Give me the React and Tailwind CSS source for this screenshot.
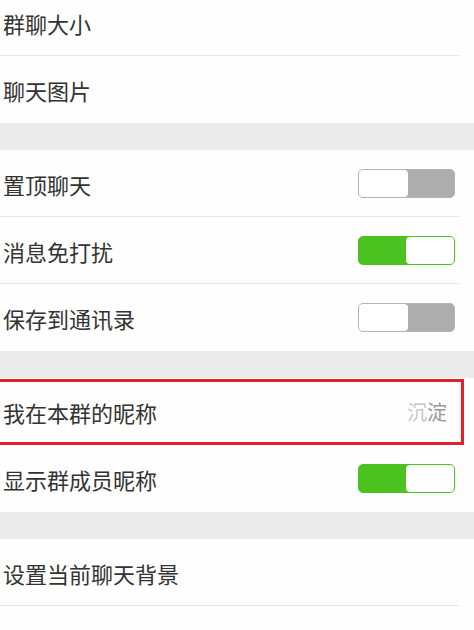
import React from "react";

const font = { fontFamily: '"Noto Sans CJK SC", "Noto Sans", sans-serif' };

function Toggle({ on }) {
  if (on) {
    return (
      <div className="w-[97px] h-[29px] rounded-[5px] bg-[#4bc21f] border border-[#4bc21f] flex justify-end">
        <div className="w-[48px] h-full rounded-[4px] bg-white" />
      </div>
    );
  }
  return (
    <div className="w-[97px] h-[29px] rounded-[5px] bg-[#adadad] border border-[#b3b3b3] flex">
      <div className="w-[49px] h-full rounded-[4px] bg-white" />
    </div>
  );
}

function Row({ label, divider, children, className = "" }) {
  return (
    <div className={"relative h-[67px] bg-[#fefefe] flex items-center pl-[3px] pr-[19px] " + className}>
      <span className="text-[22px] text-[#333333] leading-none">{label}</span>
      <div className="ml-auto flex items-center">{children}</div>
      {divider && <div className="absolute left-0 bottom-0 w-[459px] h-px bg-[#e6e6e6]" />}
    </div>
  );
}

function Band() {
  return <div className="h-[27px] bg-[#ebebeb]" />;
}

export default function App() {
  return (
    <div className="w-[474px] h-[630px] overflow-hidden bg-[#fefefe]" style={font}>
      <Row label="群聊大小" divider className="-mt-[11px]" />
      <Row label="聊天图片" />
      <Band />
      <Row label="置顶聊天" divider>
        <Toggle on={false} />
      </Row>
      <Row label="消息免打扰" divider>
        <Toggle on />
      </Row>
      <Row label="保存到通讯录">
        <Toggle on={false} />
      </Row>
      <Band />
      <Row label="我在本群的昵称" className="pr-[27px]">
        <span className="text-[20px] leading-none text-[#c8c8c8]">沉</span>
        <span className="text-[20px] leading-none text-[#9a9a9a]">淀</span>
        <div className="absolute -left-[4px] top-[1px] right-[10px] bottom-[0px] border-[3px] border-[#e21f2d]" />
      </Row>
      <Row label="显示群成员昵称">
        <Toggle on />
      </Row>
      <Band />
      <Row label="设置当前聊天背景" divider className="h-[66px]" />
    </div>
  );
}
